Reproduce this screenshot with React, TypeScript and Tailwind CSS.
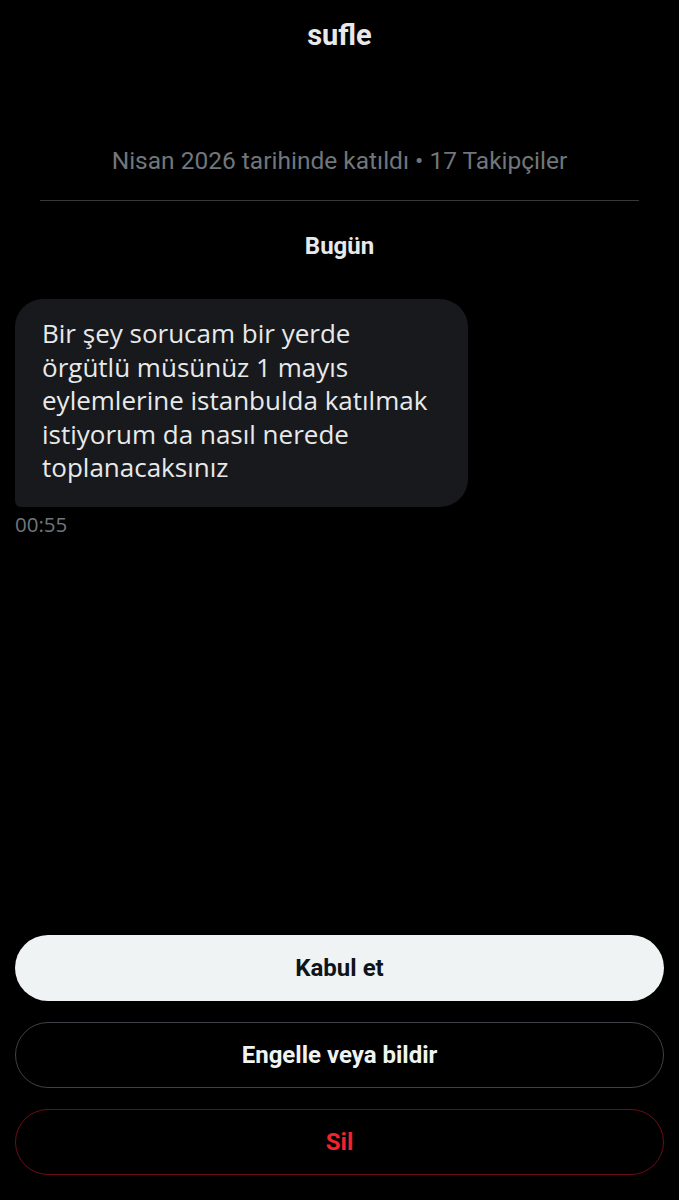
import React from "react";

const chirp = { fontFamily: "Roboto, 'Noto Sans', sans-serif" };

export default function App() {
  return (
    <div className="min-h-[1200px] bg-black flex flex-col" style={chirp}>
      <div className="pt-[19px] text-center text-[29px] leading-[32px] font-bold text-[#e7e9ea]">sufle</div>

      <div className="mt-[95px] text-center text-[24.5px] leading-[30px] text-[#71767b]">
        Nisan 2026 tarihinde katıldı • 17 Takipçiler
      </div>

      <div className="mx-[40px] mt-[24px] h-px bg-[#36393c]" />

      <div className="mt-[31px] text-center text-[24px] leading-[28px] font-bold text-[#e7e9ea]">Bugün</div>

      <div className="mt-[39px] ml-[15px] w-[453px] rounded-[28px] rounded-bl-[6px] bg-[#18191c] px-[27px] pt-[18px] pb-[22px]">
        <p className="font-['Open_Sans',sans-serif] text-[26px] leading-[33.5px] text-[#e7e9ea]">
          Bir şey sorucam bir yerde örgütlü müsünüz 1 mayıs eylemlerine istanbulda katılmak istiyorum da nasıl nerede toplanacaksınız
        </p>
      </div>

      <div className="mt-[4px] ml-[15px] font-['Open_Sans',sans-serif] text-[20.5px] leading-[26px] text-[#71767b]">00:55</div>

      <div className="flex-1" />

      <div className="flex flex-col gap-[21px] px-[15px] pb-[25px]">
        <button className="h-[66px] rounded-full bg-[#eff3f4] text-[24px] font-bold text-[#0f1419]">Kabul et</button>
        <button className="h-[66px] rounded-full border border-[#3e4246] text-[24px] font-bold text-[#eff3f4]">Engelle veya bildir</button>
        <button className="h-[66px] rounded-full border border-[#6b0f16] text-[24px] font-bold text-[#f4212e]">Sil</button>
      </div>
    </div>
  );
}
